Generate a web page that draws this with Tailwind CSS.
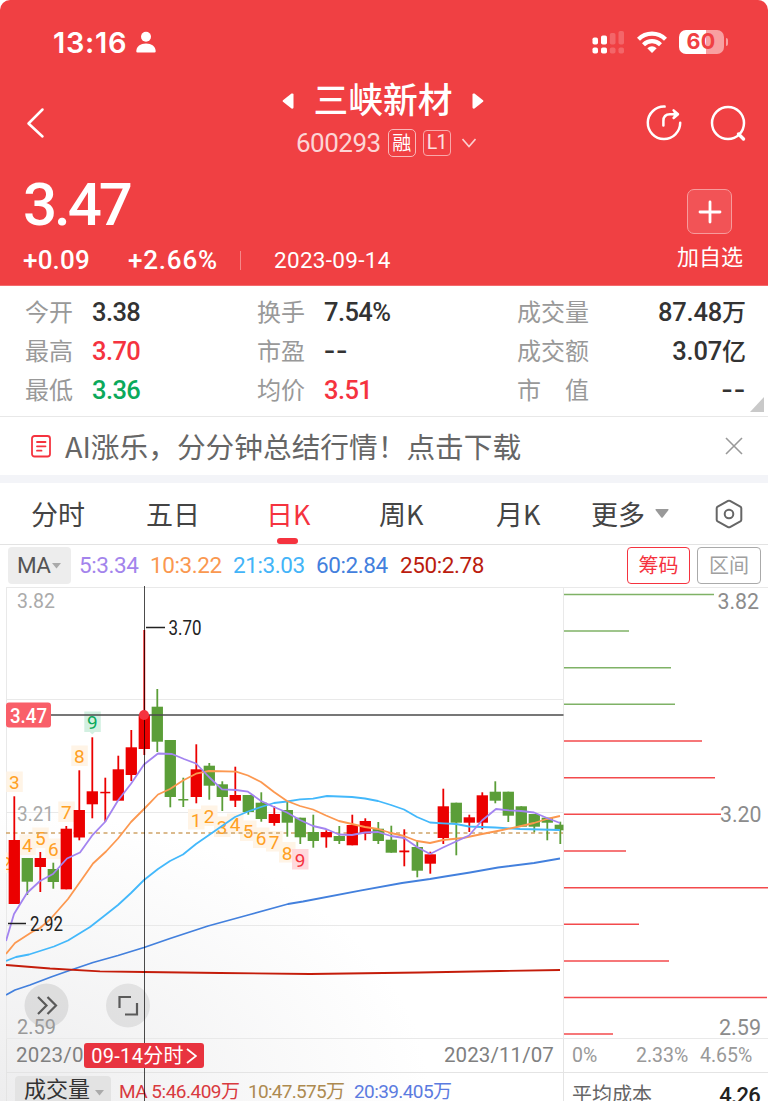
<!DOCTYPE html>
<html lang="zh-CN">
<head>
  <meta charset="UTF-8">
  <meta name="viewport" content="width=device-width, initial-scale=1.0">
  <title>三峡新材 600293</title>
  <script src="https://cdn.jsdelivr.net/npm/@tailwindcss/browser@4"></script>
  <style>
    body, svg text {
      font-family: Roboto, "Noto Sans CJK SC", sans-serif;
    }
  </style>
</head>
<body class="w-[768px] h-[1101px] overflow-hidden bg-white text-[#333]">
  <!-- header -->
  <header class="h-[286px] bg-[#f04043] rounded-t-[10px] text-white border-b border-[#f46a6c]">
    <div class="flex items-center h-[84px] pl-[53px] pr-[40px]">
      <span class="font-['Inter'] font-semibold text-[29px] leading-none tracking-[0.7px]">13:16</span>
      <svg class="ml-[9px]" width="20" height="22" viewBox="0 0 20 22" fill="#fff"><circle cx="10" cy="5.7" r="5"/><path d="M0.3 20.5C0.3 15.5 4.5 12.6 10 12.6S19.7 15.5 19.7 20.5Q19.7 21.5 18.5 21.5H1.5Q0.3 21.5 0.3 20.5Z"/></svg>
      <svg class="ml-auto" width="32" height="24" viewBox="0 0 32 24" fill="#fff">
        <rect x="0.5" y="7.5" width="5.5" height="7" rx="1.8"/><rect x="0.5" y="17.5" width="5.5" height="6" rx="1.8"/>
        <rect x="9" y="5.5" width="6" height="9" rx="1.8"/><rect x="9" y="17.5" width="6" height="6" rx="1.8"/>
        <g opacity="0.2"><rect x="17.8" y="3" width="5.7" height="11.5" rx="1.8"/><rect x="17.8" y="17.5" width="5.7" height="6" rx="1.8"/>
        <rect x="26.5" y="1" width="5.5" height="13.5" rx="1.8"/><rect x="26.5" y="17.5" width="5.5" height="6" rx="1.8"/></g>
      </svg>
      <svg class="ml-[13px]" width="30" height="24" viewBox="0 0 30 24" fill="none" stroke="#fff" stroke-width="4.3"><path d="M1.5 9.2C9 1.8 21 1.8 28.5 9.2"/><path d="M6.5 14.8C11.5 10 18.5 10 23.5 14.8"/><path d="M10.3 18.3Q15 14.2 19.7 18.3L15 23Z" fill="#fff" stroke="none"/></svg>
      <div class="ml-[12px] flex items-center">
        <div class="w-[45px] h-[24px] rounded-[7px] bg-linear-to-r from-white from-60% to-[#f8a0a1] to-60% flex items-center justify-center font-['Inter'] font-bold text-[21.5px] leading-none tracking-[0.3px] text-[#f04043]">60</div>
        <div class="ml-[2px] w-[2.5px] h-[8px] rounded-r-full bg-[#f8a0a1]"></div>
      </div>
    </div>
    <div class="flex h-[80px] pl-[26px] pr-[21px] justify-between">
      <svg class="mt-[23px]" width="20" height="32" viewBox="0 0 20 32" fill="none" stroke="#fff" stroke-width="2.5" stroke-linecap="round" stroke-linejoin="round"><path d="M16.5 2.5L2.5 16.5L16.5 29.5"/></svg>
      <div class="w-[202px] ml-[75px] flex flex-col">
        <div class="flex items-center justify-between h-[34px]">
          <svg width="12" height="16" viewBox="0 0 12 16" fill="#fff"><path d="M1 7.2Q0 8 1 8.8L9.5 15.5Q11.5 16 11.5 14.5V1.5Q11.5 0 9.5 .5Z"/></svg>
          <span class="text-[34.8px] leading-none font-medium">三峡新材</span>
          <svg width="12" height="16" viewBox="0 0 12 16" fill="#fff"><path d="M11 7.2Q12 8 11 8.8L2.5 15.5Q.5 16 .5 14.500V1.5Q.5 0 2.5 .5Z"/></svg>
        </div>
        <div class="flex items-center h-[28px] mt-[11px] pl-[14px] text-[#fcd5d5] whitespace-nowrap">
          <span class="text-[26px] leading-none tracking-[-0.5px]">600293</span>
          <span class="ml-[7px] shrink-0 size-[28px] border-[1.5px] border-[#f9b8b9] rounded-[5px] flex items-center justify-center text-[19px] leading-none text-white">融</span>
          <span class="ml-[7px] shrink-0 w-[28px] h-[26px] border border-[#f9a8a9] rounded-[4px] flex items-center justify-center text-[19.5px] leading-none tracking-[-0.8px] text-[#fde0e0]">L1</span>
          <svg class="ml-[11px] shrink-0" width="14" height="10" viewBox="0 0 14 10" fill="none" stroke="#fbd0d0" stroke-width="1.6"><path d="M.5 1L7 8.5L13.5 1"/></svg>
        </div>
      </div>
      <div class="flex gap-[26px] pt-[20px]">
        <svg width="38" height="38" viewBox="0 0 38 38" fill="none" stroke="#fff" stroke-width="2.5" stroke-linecap="round" stroke-linejoin="round"><path d="M19.6 2.6A16.2 16.2 0 1 0 35.2 18.8"/><path d="M18.4 21.500V17Q18.4 10.2 25 10.2H32"/><path d="M28.6 6.4L33 10.2L28.6 14" fill="#fff"/></svg>
        <svg width="38" height="38" viewBox="0 0 38 38" fill="none" stroke="#fff" stroke-width="2.5" stroke-linecap="round"><circle cx="19" cy="19" r="16"/><path d="M29.5 30L34.5 35" stroke-width="3.4"/></svg>
      </div>
    </div>
    <div class="flex justify-between pl-[23px] pr-[25px]">
      <div>
        <div class="h-[76px] pt-[11px] text-[60px] leading-[60px] font-medium tracking-[-3px]">3.47</div>
        <div class="flex items-center h-[40px] leading-none font-medium text-[26px]">
          <span class="w-[105px] tracking-[0.2px]">+0.09</span>
          <span class="w-[112px] tracking-[0.8px]">+2.66%</span>
          <span class="w-px h-[19px] bg-[#f68889]"></span>
          <span class="ml-[33px] text-[22.5px] font-normal tracking-[0.3px]">2023-09-14</span>
        </div>
      </div>
      <div class="flex flex-col items-center pt-[25px]">
        <div class="size-[45px] rounded-[7px] border border-[#f79b9c] bg-white/10 flex items-center justify-center">
          <svg width="24" height="24" viewBox="0 0 24 24" stroke="#fff" stroke-width="2.8" stroke-linecap="round"><path d="M12 2V22M2 12H22"/></svg>
        </div>
        <span class="mt-[13px] text-[22px] leading-[22px]">加自选</span>
      </div>
    </div>
  </header>

  <!-- quote stats -->
  <section class="relative h-[131px] pt-[7px] pl-[25px] pr-[22px] grid grid-cols-[232px_260px_1fr] auto-rows-[39px] items-center text-[24px] leading-none border-b border-[#e8e8e8]">
    <div class="flex items-center"><span class="w-[67px] text-[#999]">今开</span><b class="text-[25.5px] font-medium tracking-[-0.6px]">3.38</b></div>
    <div class="flex items-center"><span class="w-[67px] text-[#999]">换手</span><b class="text-[25.5px] font-medium tracking-[-0.6px]">7.54%</b></div>
    <div class="flex items-center justify-between"><span class="text-[#999]">成交量</span><span class="font-medium"><b class="text-[25.5px] font-medium tracking-[-0.2px]">87.48</b>万</span></div>
    <div class="flex items-center"><span class="w-[67px] text-[#999]">最高</span><b class="text-[25.5px] font-medium tracking-[-0.6px] text-[#f5333f]">3.70</b></div>
    <div class="flex items-center"><span class="w-[67px] text-[#999]">市盈</span><b class="text-[25.5px] font-medium tracking-[1px] origin-left scale-x-[1.28]">--</b></div>
    <div class="flex items-center justify-between"><span class="text-[#999]">成交额</span><span class="font-medium"><b class="text-[25.5px] font-medium tracking-[-0.2px]">3.07</b>亿</span></div>
    <div class="flex items-center"><span class="w-[67px] text-[#999]">最低</span><b class="text-[25.5px] font-medium tracking-[-0.6px] text-[#0ba95b]">3.36</b></div>
    <div class="flex items-center"><span class="w-[67px] text-[#999]">均价</span><b class="text-[25.5px] font-medium tracking-[-0.6px] text-[#f5333f]">3.51</b></div>
    <div class="flex items-center justify-between"><span class="text-[#999]">市　值</span><b class="text-[25.5px] font-medium tracking-[1px] origin-right scale-x-[1.28]">--</b></div>
    <svg class="absolute right-[4px] bottom-[4px]" width="14" height="15" viewBox="0 0 14 15"><path d="M14 0V15H0Z" fill="#c9c9c9"/></svg>
  </section>

  <!-- promo banner -->
  <section class="h-[66px] border-b-[8px] border-[#f3f4f8] flex items-center pl-[31px] pr-[25px]">
    <svg width="20" height="23" viewBox="0 0 20 23" fill="none" stroke="#f5333f" stroke-width="1.8" stroke-linecap="round"><rect x="1" y="1" width="18" height="20.5" rx="2.500"/><path d="M6 7H14.5M6 11.3H14.5M6 15.7H10.5"/></svg>
    <span class="ml-[14px] text-[28.7px] leading-none text-[#666] font-['Noto_Sans_CJK_SC']">AI涨乐，分分钟总结行情！点击下载</span>
    <svg class="ml-auto" width="18" height="18" viewBox="0 0 18 18" stroke="#999" stroke-width="1.6"><path d="M1 1L17 17M17 1L1 17"/></svg>
  </section>

  <!-- period tabs -->
  <nav class="h-[62px] border-b border-[#e3e3e3] flex items-center pl-[31px] text-[27px] leading-none text-[#444] font-['Noto_Sans_CJK_SC']">
    <span class="w-[115px]">分时</span>
    <span class="w-[120px]">五日</span>
    <span class="relative w-[113px] h-full flex items-center text-[#f5333f]">日K<i class="absolute left-[11px] bottom-0 w-[21px] h-[6px] rounded-[3px] bg-[#f5333f]"></i></span>
    <span class="w-[117px]">周K</span>
    <span class="w-[95px]">月K</span>
    <span>更多</span>
    <svg class="ml-[10px]" width="14" height="9" viewBox="0 0 14 9"><path d="M1 0H13Q14 .3 13.5 1L7.7 8.5Q7 9 6.3 8.5L.5 1Q0 .3 1 0Z" fill="#999"/></svg>
    <svg class="ml-[45px]" width="30" height="30" viewBox="0 0 30 30" fill="none" stroke="#666" stroke-width="2" stroke-linejoin="round"><path d="M14 1.9Q15 1.4 16 1.9L26.3 7.6Q27.3 8.2 27.3 9.3V20.7Q27.3 21.8 26.3 22.4L16 28.1Q15 28.6 14 28.1L3.7 22.4Q2.7 21.8 2.7 20.7V9.3Q2.7 8.2 3.7 7.6Z"/><circle cx="15" cy="15" r="4.3"/></svg>
  </nav>

  <!-- chart -->
  <main class="relative h-[556px] bg-[radial-gradient(ellipse_430px_290px_at_0%_100%,#ededee,#ffffff)]">
    <div class="flex items-center h-[41px] pl-[8px] pr-[7px] text-[22.5px] leading-none">
      <span class="w-[63px] h-[37px] rounded-[4px] bg-[#ededed] text-[#555] flex items-center pl-[9px] text-[22.5px] tracking-[-0.5px]">MA<svg class="ml-px" width="9" height="6" viewBox="0 0 9 6"><path d="M0 0H9L4.5 5.5Z" fill="#aaa"/></svg></span>
      <span class="ml-[8px] w-[71px] tracking-[-0.4px] text-[#a384ec]">5:3.34</span>
      <span class="w-[83px] tracking-[-0.4px] text-[#fa9850]">10:3.22</span>
      <span class="w-[83px] tracking-[-0.4px] text-[#43b4f8]">21:3.03</span>
      <span class="w-[84px] tracking-[-0.4px] text-[#4380dd]">60:2.84</span>
      <span class="tracking-[-0.4px] text-[#bb1c0e]">250:2.78</span>
      <span class="ml-auto w-[63px] h-[37px] rounded-[4px] border border-[#f5333f] text-[#f5333f] flex items-center justify-center text-[20px]">筹码</span>
      <span class="ml-[7px] w-[64px] h-[37px] rounded-[4px] border border-[#aaa] text-[#a0a0a0] flex items-center justify-center text-[20px]">区间</span>
    </div>
    <svg id="chart" class="block" width="768" height="453" viewBox="0 586 768 453"></svg>
    <div class="flex items-center h-[34px] ml-[6px] border-b border-l border-[#e4e4e4] text-[20.5px] leading-none text-[#808080]">
      <span class="pl-[9px] tracking-[0.3px]">2023/08</span>
      <span class="ml-auto tracking-[0.1px]">2023/11/07</span>
      <div class="ml-[9px] w-[205px] h-full border-l border-[#e4e4e4] flex items-center pl-[8px] text-[19.5px] text-[#999] bg-white">
        <span class="w-[64px]">0%</span><span class="w-[64px]">2.33%</span><span>4.65%</span>
      </div>
    </div>
    <div class="flex h-[28px] ml-[6px] border-l border-[#e4e4e4] leading-none whitespace-nowrap overflow-hidden">
      <span class="ml-[8px] mt-[3px] w-[96px] h-[37px] shrink-0 rounded-[4px] bg-[#e3e3e3] pl-[9px] pt-[3px] text-[22px] text-[#333] flex">成交量<svg class="ml-[5px] mt-[11px]" width="9" height="6" viewBox="0 0 9 6"><path d="M0 0H9L4.5 5.5Z" fill="#aaa"/></svg></span>
      <span class="ml-[8px] w-[129px] pt-[9px] text-[19px] tracking-[-0.5px] text-[#d93a3f]">MA 5:46.409万</span>
      <span class="w-[106px] pt-[9px] text-[19px] tracking-[-0.7px] text-[#ad8a50]">10:47.575万</span>
      <span class="pt-[9px] text-[19px] tracking-[-0.6px] text-[#5b7be0]">20:39.405万</span>
      <div class="ml-auto w-[205px] border-l border-[#e4e4e4] flex justify-between pl-[8px] pr-[8px] pt-[12px] bg-white">
        <span class="text-[20px] text-[#666]">平均成本</span>
        <span class="text-[22px] font-medium text-[#222] tracking-[-0.7px]">4.26</span>
      </div>
    </div>
    <!-- crosshair and date flag -->
    <div class="absolute left-[144px] top-[41px] bottom-0 w-px bg-black/70">
      <div class="absolute -left-[5px] top-[124px] size-[10px] rounded-full bg-[#f5333f]"></div>
    </div>
    <div class="absolute left-[84px] top-[498px] w-[120px] h-[25px] rounded-[3px] bg-[#e8333f] text-white flex items-center justify-center text-[20px] leading-none tracking-[0.3px] whitespace-nowrap">
      <span>09-14分时</span>
      <svg class="ml-[2px]" width="11" height="16" viewBox="0 0 11 16" fill="none" stroke="#fff" stroke-width="1.8"><path d="M1 1L10 8L1 15"/></svg>
    </div>
  </main>

  <script>
    const RED = '#eb0000', GREEN = '#5b9e38';
    // [up, high, top, bottom, low]
    const candles = [
      [1,796.3,840,904,904],[0,858,858,881.7,895],[1,852,858,867,892],[0,862.7,869,882,888.7],
      [1,826,828.7,889.3,889.3],[1,770.3,810,837.5,840.3],[1,737.3,791.3,804.3,818.3],[1,777.7,791.8,793.3,821.7],
      [1,755.7,769.3,800.7,800.7],[1,730,747.3,775,781],[1,630,715,749,755],[0,689,706.7,741.7,752],
      [0,740,740,797,807.3],[0,777.7,799,800.5,807],[1,744.3,769.3,797,803.3],[0,763,765.7,785.7,799.7],
      [0,781.3,784.3,797,811],[1,766.7,795,800.7,807],[0,795,795,812,814.7],[0,792.3,802.7,819,821.7],
      [1,806.3,814,823,825.7],[0,801,810,822.7,836.7],[0,817.7,817.7,837.3,844],[0,814.7,832,841,847.7],
      [1,830.3,832,837.3,847.7],[0,826,836,841,844],[1,814.7,825,845.3,845.3],[1,818.3,821,833.7,840.3],
      [0,822,828.7,841,844],[0,825.7,839.7,852.7,852.7],[1,829.3,850.5,852.3,866.3],[0,841,847,870.7,877.3],
      [1,851.7,854.3,863.7,873.7],[1,788.7,806.3,838,844],[0,802.7,802.7,822.7,855.3],[1,814.7,817.3,822.7,832],
      [1,792.3,795.3,822.7,829.3],[0,781.3,791.7,800.7,803.3],[0,791.7,791.7,815.7,822],[0,806.3,806.3,826.7,826.7],
      [0,814,814,826.7,832.3],[0,817.7,817.7,822.7,840.3],[0,821.7,824.7,830.3,844]
    ];
    const averages = [
      ['#4380dd', '6,995 15,990 30,985 51,977 68,971 93,962.5 118,955.5 144,947.5 170,938.5 208,926 250,914.5 288,904 303,901.5 360,890.7 402,883 430,879 445,876.5 470,872.5 498,867.5 534,863 560,858.5'],
      ['#c41c0a', '6,965 50,968.5 100,971.3 144,972 220,973 310,974 420,972.5 500,971 560,970'],
      ['#43b8fb', '6,961 16,957 29,954.5 54,946.5 68,940.5 90,927 106,914.5 118,905 131,893 144,880 158,869 170,861 183,854.5 196,844 209,835 222,826 235,817 248,811.5 261,807 274,803 287,801.5 300,799.3 313,798.7 327,796 352,797 365,798.5 378,801 391,805 404,809.5 417,817 430,822.5 443,823.3 456,824 469,826.5 495,827.5 520,829 560,830'],
      ['#fc9850', '6,954 15,943 32,932 40,928 50,919.5 68,899 80,882 93,863.5 106,851.5 118,838.5 131,822 145,808 158,794.5 170,789 183,780.5 196,773.7 209,771 236,771.7 248,775.5 261,782 274,792 287,801 300,806 313,809.5 326,815.5 339,821 352,824 365,827 378,829 391,833 404,836 417,841 430,843 443,840 463,838 482,834 500,830.5 517,827 534,823 547,819 560,816'],
      ['#a384f0', '6,941 14,914 27,893 40,881 53,874 67,858.5 80,852.5 92,835.7 105,822 118,800.5 131,783.7 144,764.5 158,753.5 172,754 184,759 196,763.5 209,777 222,789.3 236,790 248,791.7 261,801 274,807 287,812.5 300,820 313,826 326,829 339,834.5 352,835 365,832.5 378,832 391,836 404,838 417,847 430,854 443,847.5 456,841.5 469,835.5 482,820.5 496,809 509,810.3 521,811 534,812.5 547,818 560,823']
    ];
    // [digit, x, y, kind]
    const marks = [
      ['2',6,863],['3',14.3,782],['4',27.3,845],['5',40.3,838],['6',53.3,849],['7',66.3,812],['8',79.3,756],['9',92.3,722,'g'],
      ['1',196,819.5],['2',209,816],['3',222,827],['4',235,824],['5',248,831],['6',261,838],['7',274,841.5],['8',287,852.5],['9',300,859.5,'r']
    ];
    const chips = [[594.5,714],[631,629],[667.7,671],[704.3,675],[741,702],[777.7,715],[814.3,721],[851,626],[887.7,768],[924.3,639],[961,669],[997.5,767],[1034,613]];

    const text = (x, y, w, size, fill, s, extra = '') =>
      `<text x="${x}" y="${y}" font-size="${size}" fill="${fill}" textLength="${w}" lengthAdjust="spacingAndGlyphs" ${extra}>${s}</text>`;

    let out = '<rect x="564" y="588" width="204" height="451" fill="#fff"/>';
    out += '<defs><clipPath id="plot"><rect x="6" y="586" width="557.5" height="453"/></clipPath></defs>';
    out += '<path d="M6 587.5H768M6.5 587V1039M563.5 587V1039M6 699.5H563M6 812.5H563M6 925.5H563M6 1038.5H768" stroke="#e9e9e9" fill="none"/>';
    out += '<circle cx="46.5" cy="1005.5" r="22" fill="#000" opacity="0.09"/><circle cx="128" cy="1005.5" r="22" fill="#000" opacity="0.08"/>';
    out += '<path d="M38 997L46.5 1005.5L38 1014M47.5 997L56 1005.5L47.5 1014M119.5 1008V997H131M137 1003V1014.5H125" stroke="#5a5a5a" stroke-width="2.2" fill="none"/>';
    out += text(17, 607.5, 38, 21, '#aaa', '3.82') + text(17, 821, 37, 21, '#aaa', '3.21') + text(17, 1034, 39, 21, '#999', '2.59');

    out += '<g clip-path="url(#plot)">';
    marks.forEach(([d, x, y, kind]) => {
      const bg = kind === 'g' ? '#d3f0e1' : kind === 'r' ? '#ffd9dc' : '#fff4e6';
      out += `<rect x="${x - 8}" y="${y - 10.5}" width="16.5" height="20.5" fill="${bg}"/>`;
      if (kind === 'g') out += `<path d="M${x - 3} ${y + 9.5}h6l-3 3z" fill="${bg}"/>`;
    });
    marks.forEach(([d, x, y, kind]) => {
      const fg = kind === 'g' ? '#0ba95b' : kind === 'r' ? '#f5333f' : '#ffa024';
      out += `<text x="${x}" y="${y + 7}" font-size="19" text-anchor="middle" fill="${fg}">${d}</text>`;
    });
    out += '<path d="M6 833H563" stroke="#d0a468" stroke-width="1.6" stroke-dasharray="4 3.5"/>';
    candles.forEach(([up, hi, top, bot, lo], i) => {
      const x = 14.3 + i * 13, c = up ? RED : GREEN;
      const w = bot - top < 2 ? 10 : 11.3;
      out += `<rect x="${x - .9}" y="${hi}" width="1.8" height="${lo - hi}" fill="${c}"/><rect x="${x - w / 2}" y="${top}" width="${w}" height="${bot - top}" fill="${c}"/>`;
    });
    averages.forEach(([c, pts]) => {
      out += `<polyline points="${pts}" fill="none" stroke="${c}" stroke-width="1.8" stroke-linejoin="round"/>`;
    });
    out += '</g>';

    chips.forEach(([y, x], i) => {
      out += `<path d="M564 ${y}H${x}" stroke="${i < 4 ? '#7fb266' : '#f34a4d'}" stroke-width="1.5"/>`;
    });
    out += text(717.5, 609, 41.5, 22.5, '#8c8c8c', '3.82') + text(720, 822, 41.5, 22.5, '#8c8c8c', '3.20') + text(719, 1035, 42, 22.5, '#8c8c8c', '2.59');

    out += '<path d="M146 627.5H165M8 923.5H26" stroke="#222" stroke-width="1.6"/>';
    out += text(168.5, 634.5, 33, 19.5, '#222', '3.70') + text(30, 930.5, 33, 19.5, '#222', '2.92');
    out += '<path d="M6 715H563.5" stroke="#4a4a4a" stroke-width="1.3"/>';
    out += '<rect x="6" y="702.5" width="45" height="25" rx="3" fill="#f95f69"/>' + text(10, 722.5, 37, 21, '#fff', '3.47', 'font-weight="500"');
    document.getElementById('chart').innerHTML = out;
  </script>
</body>
</html>
